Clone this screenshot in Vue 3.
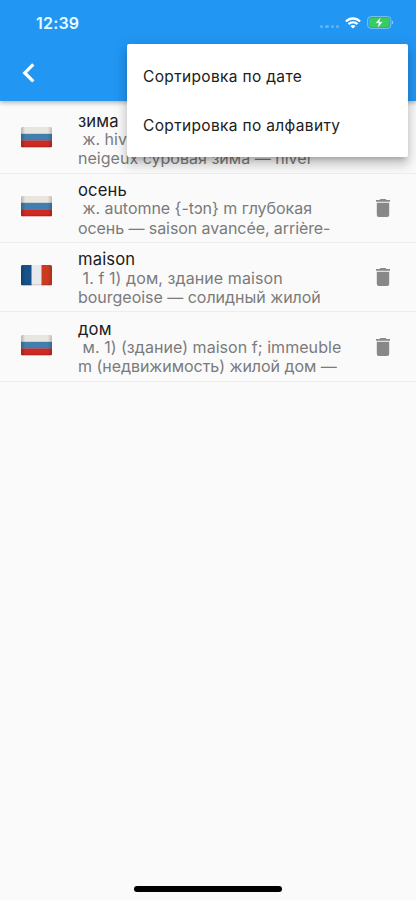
<script setup>
const rows = [
  {
    word: 'зима',
    flag: 'ru',
    lines: [
      { text: ' ж. hiver m снежная зима — hiver', tracking: 0 },
      { text: 'neigeux суровая зима — hiver', tracking: 0.02 },
    ],
  },
  {
    word: 'осень',
    flag: 'ru',
    lines: [
      { text: ' ж. automne {-tɔn} m глубокая', tracking: -0.03 },
      { text: 'осень — saison avancée, arrière-', tracking: -0.08 },
    ],
  },
  {
    word: 'maison',
    flag: 'fr',
    lines: [
      { text: ' 1. f 1) дом, здание maison', tracking: 0.08 },
      { text: 'bourgeoise — солидный жилой', tracking: -0.02 },
    ],
  },
  {
    word: 'дом',
    flag: 'ru',
    lines: [
      { text: ' м. 1) (здание) maison f; immeuble', tracking: 0.05 },
      { text: 'm (недвижимость) жилой дом —', tracking: -0.04 },
    ],
  },
]
const sortOptions = ['Сортировка по дате', 'Сортировка по алфавиту']
</script>

<template>
  <div class="screen">
    <header class="header">
      <div class="status">
        <span class="time">12:39</span>
        <div class="indicators">
          <span class="dots"><i v-for="n in 4" :key="n"></i></span>
          <svg class="wifi" width="16" height="12" viewBox="0 0 16 12">
            <path d="M.1 3.700C4.600-.9 11.400-.9 15.900 3.700L14.300 5.300C10.700 1.900 5.300 1.900 1.700 5.300Z" />
            <path d="M2.700 6.300C5.700 3.400 10.300 3.400 13.300 6.300L11.600 8C9.500 6.100 6.500 6.100 4.400 8Z" />
            <path d="M5.400 8.900C6.900 7.600 9.100 7.600 10.600 8.900L8 11.600Z" />
          </svg>
          <svg class="battery" width="27" height="13" viewBox="0 0 27 13">
            <rect x=".6" y=".6" width="23.300" height="11.800" rx="3.300" fill="none" stroke="#7fc0f8" />
            <rect x="2" y="2" width="20.500" height="9" rx="2" fill="#35ce5c" />
            <path d="M25 4.500C26.700 5.200 26.700 7.800 25 8.500Z" fill="#8fc8fa" />
            <path d="M13.600 .9L8.300 7.200H11.500L10.500 12.200L16 5.800H12.700Z" fill="#fff" stroke="#35b985" stroke-width=".5" />
          </svg>
        </div>
      </div>
      <div class="toolbar">
        <svg class="back" width="13" height="20" viewBox="0 0 13 20">
          <path d="M11.300 1.400L2.800 9.900L11.300 18.400" />
        </svg>
      </div>
    </header>

    <main class="list">
      <article v-for="row in rows" :key="row.word" class="row">
        <svg class="flag" width="31" height="21" viewBox="0 0 31 21">
          <defs>
            <clipPath :id="'clip-' + row.word"><rect width="31" height="20.500" rx="1.500" /></clipPath>
            <linearGradient :id="'shade-' + row.word">
              <stop offset="0" stop-color="#000" stop-opacity=".22" />
              <stop offset=".14" stop-color="#000" stop-opacity="0" />
              <stop offset=".86" stop-color="#000" stop-opacity="0" />
              <stop offset="1" stop-color="#000" stop-opacity=".18" />
            </linearGradient>
          </defs>
          <g :clip-path="`url(#clip-${row.word})`">
            <template v-if="row.flag === 'ru'">
              <rect width="31" height="7" fill="#e9e6df" />
              <rect y="6.800" width="31" height="7" fill="#427fae" />
              <rect y="13.500" width="31" height="7" fill="#cf2922" />
            </template>
            <template v-else>
              <rect width="11" height="20.500" fill="#17528b" />
              <rect x="10.500" width="10.500" height="20.500" fill="#e7e9ec" />
              <rect x="20.500" width="10.500" height="20.500" fill="#cc3a20" />
            </template>
            <rect width="31" height="20.500" :fill="`url(#shade-${row.word})`" />
            <rect y="19.500" width="31" height="1" fill="#000" opacity=".2" />
          </g>
        </svg>
        <div class="body">
          <div class="word">{{ row.word }}</div>
          <div
            v-for="line in row.lines"
            :key="line.text"
            class="line"
            :style="{ letterSpacing: line.tracking + 'px' }"
          >{{ line.text }}</div>
        </div>
        <svg class="trash" width="14" height="18" viewBox="0 0 14 18">
          <path d="M0 1H3.500L4.500 0H9.500L10.500 1H14V2.800H0ZM.8 3.800H13.200V16Q13.200 18 11.200 18H2.800Q.8 18 .8 16Z" />
        </svg>
      </article>
    </main>

    <div class="menu">
      <div v-for="option in sortOptions" :key="option" class="option">{{ option }}</div>
    </div>
    <div class="home"></div>
  </div>
</template>

<style>
body { margin: 0; }
</style>

<style scoped>
.screen {
  position: relative;
  width: 416px;
  height: 900px;
  overflow: hidden;
  box-sizing: border-box;
  background: #fafafa;
  font-family: Inter, "Liberation Sans", sans-serif;
  color: #202020;
}
.header {
  position: relative;
  height: 100.5px;
  background: #2196f3;
  box-shadow: 0 2px 4px rgba(0, 0, 0, 0.22), 0 1px 7px rgba(0, 0, 0, 0.08);
}
.status {
  display: flex;
  justify-content: space-between;
  align-items: center;
  height: 45px;
  padding: 0 22px 0 36px;
}
.time {
  font-size: 16px;
  font-weight: 600;
  letter-spacing: 0.2px;
  color: #e9fcff;
}
.indicators { display: flex; align-items: center; }
.dots { display: flex; gap: 2px; margin: 8px 6px 0 0; }
.dots i { width: 3.200px; height: 3.500px; border-radius: 1.500px; background: #63b5f7; }
.wifi { fill: #fff; margin-right: 6px; }
.toolbar { display: flex; align-items: center; height: 55px; padding-left: 22px; }
.back path { fill: none; stroke: #fff; stroke-width: 3.300; }
.list { padding-top: 4px; }
.row {
  display: flex;
  align-items: center;
  box-sizing: border-box;
  height: 69.300px;
  padding: 0 26.500px 0 21px;
  border-bottom: 1px solid #ededed;
}
.flag { flex: none; margin-top: -3px; }
.body { flex: 1; margin-left: 26px; margin-top: 2px; }
.word, .line {
  font-size: 16px;
  line-height: 19.300px;
  height: 19.300px;
  white-space: pre;
}
.word { font-size: 16.600px; line-height: 21px; letter-spacing: 0.15px; }
.line { color: #7b7b7b; }
.trash { flex: none; fill: #888; }
.menu {
  position: absolute;
  left: 127px;
  top: 44px;
  width: 281px;
  height: 113px;
  box-sizing: border-box;
  padding-top: 8.600px;
  border-radius: 2px;
  background: #fff;
  box-shadow: 0 5px 5px -3px rgba(0, 0, 0, 0.2), 0 8px 10px 1px rgba(0, 0, 0, 0.12), 0 3px 14px 2px rgba(0, 0, 0, 0.1);
}
.option {
  display: flex;
  align-items: center;
  height: 48.500px;
  padding-left: 16px;
  font-size: 15.500px;
  letter-spacing: 0.340px;
}
.home {
  position: absolute;
  left: 134px;
  top: 886px;
  width: 148px;
  height: 5.500px;
  border-radius: 3px;
  background: #000;
}
</style>
